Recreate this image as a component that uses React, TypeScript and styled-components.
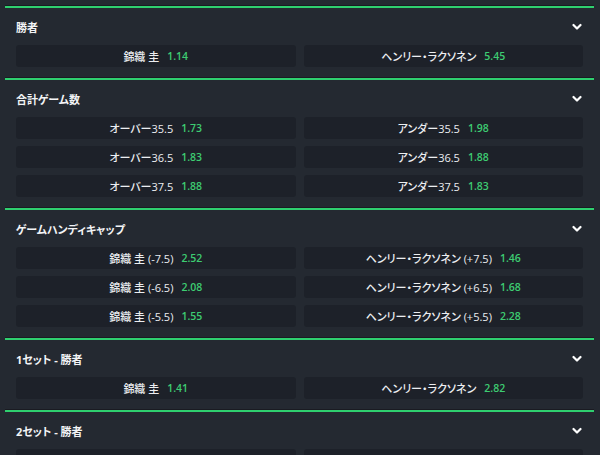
import React from "react";
import styled, { createGlobalStyle } from "styled-components";

const GlobalStyle = createGlobalStyle`
  html, body {
    margin: 0;
    padding: 0;
    background: #242931;
  }
  body {
    font-family: "Open Sans", "Noto Sans CJK JP", sans-serif;
    font-feature-settings: "palt";
    color: #eceef1;
  }
`;

type Pick = { name: string; odds: string };
type Market = { title: string; rows: [Pick, Pick][] };

const NISHI = "錦織 圭";
const HENRI = "ヘンリー・ラクソネン";

const markets: Market[] = [
  {
    title: "勝者",
    rows: [[{ name: NISHI, odds: "1.14" }, { name: HENRI, odds: "5.45" }]],
  },
  {
    title: "合計ゲーム数",
    rows: [
      [{ name: "オーバー35.5", odds: "1.73" }, { name: "アンダー35.5", odds: "1.98" }],
      [{ name: "オーバー36.5", odds: "1.83" }, { name: "アンダー36.5", odds: "1.88" }],
      [{ name: "オーバー37.5", odds: "1.88" }, { name: "アンダー37.5", odds: "1.83" }],
    ],
  },
  {
    title: "ゲームハンディキャップ",
    rows: [
      [{ name: NISHI + " (-7.5)", odds: "2.52" }, { name: HENRI + " (+7.5)", odds: "1.46" }],
      [{ name: NISHI + " (-6.5)", odds: "2.08" }, { name: HENRI + " (+6.5)", odds: "1.68" }],
      [{ name: NISHI + " (-5.5)", odds: "1.55" }, { name: HENRI + " (+5.5)", odds: "2.28" }],
    ],
  },
  {
    title: "1セット - 勝者",
    rows: [[{ name: NISHI, odds: "1.41" }, { name: HENRI, odds: "2.82" }]],
  },
  {
    title: "2セット - 勝者",
    rows: [[{ name: NISHI, odds: "1.52" }, { name: HENRI, odds: "2.45" }]],
  },
];

const Page = styled.div`
  padding: 6px 6px 0 5px;
`;

const Section = styled.section`
  border-top: 2px solid #2fcf6f;
  box-shadow: 0 -1px 0 #1a1b22;
  padding: 0 11px 11px;
`;

const Header = styled.div`
  height: 37px;
  display: flex;
  align-items: center;
  justify-content: space-between;
`;

const Title = styled.h3`
  margin: 0;
  font-size: 11px;
  font-weight: 700;
  color: #f3f4f6;
`;

const Chevron = styled.svg`
  width: 10px;
  height: 8px;
  margin-right: 1px;
`;

const Grid = styled.div`
  display: grid;
  grid-template-columns: 1fr 1fr;
  column-gap: 8px;
  row-gap: 7px;
`;

const OddsButton = styled.button`
  height: 22px;
  border: none;
  border-radius: 3px;
  background: #1d2129;
  display: flex;
  align-items: center;
  justify-content: center;
  gap: 8px;
  padding: 0;
  font-family: inherit;
  font-feature-settings: "palt";
  cursor: pointer;
`;

const Name = styled.span`
  font-size: 11px;
  font-weight: 500;
  color: #eceef1;
`;

const Odds = styled.span`
  font-size: 10.5px;
  font-weight: 600;
  color: #3dcc72;
`;

const App = () => {
  return (
    <>
      <GlobalStyle />
      <Page>
        {markets.map((m) => (
          <Section key={m.title}>
            <Header>
              <Title>{m.title}</Title>
              <Chevron viewBox="0 0 10 8">
                <polyline
                  points="1.5,2 5,5.5 8.5,2"
                  fill="none"
                  stroke="#ffffff"
                  strokeWidth="2.2"
                  strokeLinecap="round"
                  strokeLinejoin="round"
                />
              </Chevron>
            </Header>
            <Grid>
              {m.rows.map((pair, i) =>
                pair.map((p, j) => (
                  <OddsButton key={i + "-" + j}>
                    <Name>{p.name}</Name>
                    <Odds>{p.odds}</Odds>
                  </OddsButton>
                ))
              )}
            </Grid>
          </Section>
        ))}
      </Page>
    </>
  );
};

export default App;
